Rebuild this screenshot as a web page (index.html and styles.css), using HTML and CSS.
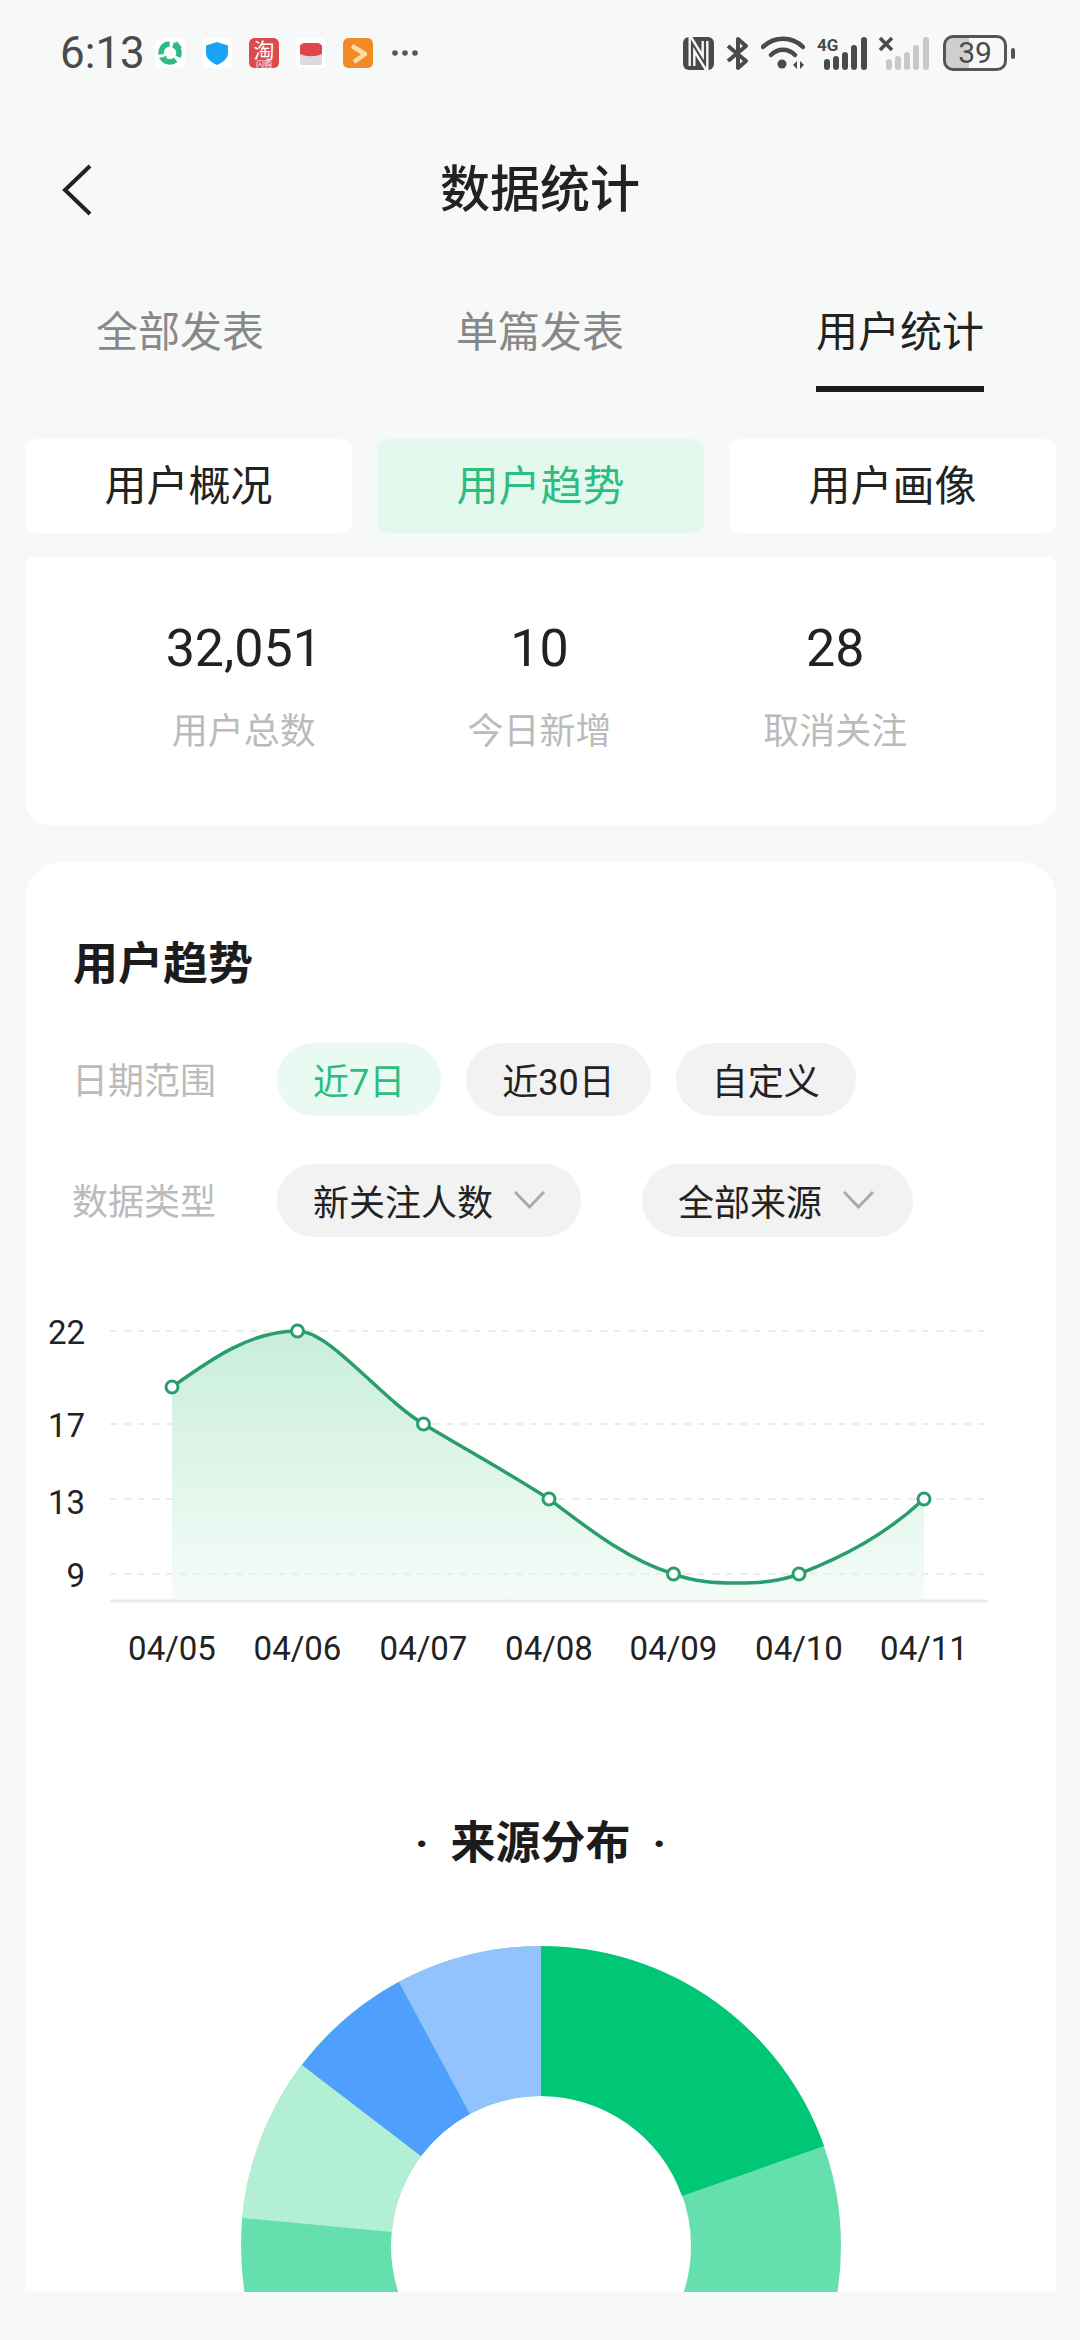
FILE: index.html
```html
<!DOCTYPE html>
<html lang="zh">
<head>
  <meta charset="utf-8">
  <title>数据统计</title>
  <link rel="stylesheet" href="styles.css">
</head>
<body>
  <div class="screen">
    <div class="status-bar">
      <div class="status-left">
        <span class="time">6:13</span>
        <div class="app-icons">
          <svg class="app-icon" viewBox="0 0 30 30">
            <circle cx="15" cy="15" r="9" fill="none" stroke="#2fb985" stroke-width="5.500" stroke-dasharray="15 3.850" transform="rotate(-70 15 15)"/>
            <path d="M22 3l5 7-8 1zM10 26l-6-6 8-2z" fill="#2fb985"/>
          </svg>
          <svg class="app-icon" viewBox="0 0 30 30">
            <path d="M15 4l11 3.500v7c0 6-5 10-11 12.500C9 24.500 4 20.500 4 14.500v-7z" fill="#1aa3f5"/>
          </svg>
          <svg class="app-icon" viewBox="0 0 30 30">
            <rect width="30" height="31" rx="5" fill="#dc4a50"/>
            <text class="taobao-main" x="15" y="20">淘</text>
            <text class="taobao-sub" x="15" y="29">闪购</text>
          </svg>
          <svg class="app-icon" viewBox="0 0 30 30">
            <path d="M4 16h22v9a2 2 0 0 1-2 2H6a2 2 0 0 1-2-2z" fill="#dcd9e0"/>
            <path d="M4 9c0-3 3-4 5-4h12c2 0 5 1 5 4v7c-7 3-15 3-22 0z" fill="#e2454c"/>
          </svg>
          <svg class="app-icon" viewBox="0 0 30 30">
            <rect width="30" height="31" rx="5" fill="#f28a28"/>
            <path d="M9 8l13 8-11 8" fill="none" stroke="#fbdca6" stroke-width="4.500" stroke-linejoin="round"/>
          </svg>
        </div>
        <svg class="more-dots" width="26" height="8" viewBox="0 0 26 8">
          <circle cx="3" cy="4" r="2.800"/><circle cx="13" cy="4" r="2.800"/><circle cx="23" cy="4" r="2.800"/>
        </svg>
      </div>
      <div class="status-right">
        <svg width="31" height="33" viewBox="0 0 31 33">
          <rect width="31" height="33" rx="6" fill="#4a4a4a"/>
          <path d="M9 29V6l13 21V4" fill="none" stroke="#f7f9f8" stroke-width="7"/>
          <path d="M9 29V6l13 21V4" fill="none" stroke="#4a4a4a" stroke-width="2.200"/>
        </svg>
        <svg width="23" height="35" viewBox="0 0 23 35">
          <path d="M2 10l18 15-8 7V3l8 7L2 25" fill="none" stroke="#4a4a4a" stroke-width="4" stroke-linejoin="round"/>
        </svg>
        <svg width="44" height="34" viewBox="0 0 44 34">
          <path d="M2 11C13 0 31 0 42 11M10 19c7-7 17-7 24 0" fill="none" stroke="#4a4a4a" stroke-width="4.500" stroke-linecap="round"/>
          <circle cx="21" cy="28" r="4.500" fill="#4a4a4a"/>
          <path d="M32 29l4-4v8zM39 25l4 4-4 4z" fill="#4a4a4a"/>
        </svg>
        <svg width="50" height="34" viewBox="0 0 50 34">
          <text class="net-label" x="0" y="15">4G</text>
          <g fill="#4a4a4a">
            <rect x="7" y="23" width="6" height="11" rx="3"/>
            <rect x="16" y="20" width="6" height="14" rx="3"/>
            <rect x="25" y="16" width="6" height="18" rx="3"/>
            <rect x="34" y="9" width="6" height="25" rx="3"/>
            <rect x="44" y="1" width="6" height="33" rx="3"/>
          </g>
        </svg>
        <svg width="50" height="34" viewBox="0 0 50 34">
          <path d="M1 2l12 12M13 2L1 14" stroke="#4a4a4a" stroke-width="3.500"/>
          <g fill="#c8c8c8">
            <rect x="7" y="23" width="6" height="11" rx="3"/>
            <rect x="16" y="20" width="6" height="14" rx="3"/>
            <rect x="25" y="16" width="6" height="18" rx="3"/>
            <rect x="34" y="9" width="6" height="25" rx="3"/>
            <rect x="44" y="1" width="6" height="33" rx="3"/>
          </g>
        </svg>
        <div class="battery">
          <div class="battery-body">39</div>
          <div class="battery-nub"></div>
        </div>
      </div>
    </div>

    <div class="nav-bar">
      <svg class="back-icon" width="30" height="52" viewBox="0 0 30 52">
        <path d="M28 2L3 26l25 24" fill="none" stroke="#222" stroke-width="4"/>
      </svg>
      <h1 class="nav-title">数据统计</h1>
      <div></div>
    </div>

    <div class="tabs">
      <div class="tab">全部发表</div>
      <div class="tab">单篇发表</div>
      <div class="tab tab-active">用户统计</div>
    </div>

    <div class="sub-tabs">
      <div class="sub-tab">用户概况</div>
      <div class="sub-tab sub-tab-active">用户趋势</div>
      <div class="sub-tab">用户画像</div>
    </div>

    <div class="stats-card">
      <div class="stat">
        <div class="stat-num">32,051</div>
        <div class="stat-label">用户总数</div>
      </div>
      <div class="stat">
        <div class="stat-num">10</div>
        <div class="stat-label">今日新增</div>
      </div>
      <div class="stat">
        <div class="stat-num">28</div>
        <div class="stat-label">取消关注</div>
      </div>
    </div>

    <div class="trend-card">
      <h2 class="card-title">用户趋势</h2>

      <div class="filter-row">
        <span class="filter-label">日期范围</span>
        <div class="pill pill-active">近7日</div>
        <div class="pill">近30日</div>
        <div class="pill">自定义</div>
      </div>

      <div class="filter-row filter-row-wide">
        <span class="filter-label">数据类型</span>
        <div class="pill pill-select">新关注人数
          <svg width="31" height="18" viewBox="0 0 31 18"><path d="M1 1l14.500 15L30 1" fill="none" stroke="#aaa" stroke-width="3"/></svg>
        </div>
        <div class="pill pill-select pill-select-source">全部来源
          <svg width="31" height="18" viewBox="0 0 31 18"><path d="M1 1l14.500 15L30 1" fill="none" stroke="#aaa" stroke-width="3"/></svg>
        </div>
      </div>

      <svg class="line-chart" width="1031" height="400" viewBox="25 1280 1031 400">
        <defs>
          <linearGradient id="areaFill" gradientUnits="userSpaceOnUse" x1="0" y1="1331" x2="0" y2="1601">
            <stop offset="0" stop-color="#c8eedb"/>
            <stop offset="1" stop-color="#f5fcf8"/>
          </linearGradient>
        </defs>
        <path fill="url(#areaFill)" d="M172 1387C210 1360 250 1331 297.500 1331C330 1331 380 1398 423.500 1424C465 1449 507 1472 549 1499C590 1530 628 1560 673.500 1574C695 1582 715 1583 737 1583C758 1583 778 1582 799 1574C845 1556 885 1535 924 1499L924 1601L172 1601Z"/>
        <g class="grid-lines">
          <line x1="110" x2="985" y1="1331" y2="1331"/>
          <line x1="110" x2="985" y1="1424" y2="1424"/>
          <line x1="110" x2="985" y1="1499" y2="1499"/>
          <line x1="110" x2="985" y1="1574" y2="1574"/>
        </g>
        <line class="axis-line" x1="110" x2="988" y1="1601" y2="1601"/>
        <path class="trend-line" d="M172 1387C210 1360 250 1331 297.500 1331C330 1331 380 1398 423.500 1424C465 1449 507 1472 549 1499C590 1530 628 1560 673.500 1574C695 1582 715 1583 737 1583C758 1583 778 1582 799 1574C845 1556 885 1535 924 1499"/>
        <g class="trend-points">
          <circle cx="172" cy="1387" r="6"/>
          <circle cx="297.500" cy="1331" r="6"/>
          <circle cx="423.500" cy="1424" r="6"/>
          <circle cx="549" cy="1499" r="6"/>
          <circle cx="673.500" cy="1574" r="6"/>
          <circle cx="799" cy="1574" r="6"/>
          <circle cx="924" cy="1499" r="6"/>
        </g>
        <g class="y-labels">
          <text x="85" y="1344">22</text>
          <text x="85" y="1437">17</text>
          <text x="85" y="1514">13</text>
          <text x="85" y="1587">9</text>
        </g>
        <g class="x-labels">
          <text x="172" y="1660">04/05</text>
          <text x="297.500" y="1660">04/06</text>
          <text x="423.500" y="1660">04/07</text>
          <text x="549" y="1660">04/08</text>
          <text x="673.500" y="1660">04/09</text>
          <text x="799" y="1660">04/10</text>
          <text x="924" y="1660">04/11</text>
        </g>
      </svg>

      <h2 class="source-title"><span>·</span>来源分布<span>·</span></h2>

      <!-- donut runs past the bottom of the screen, only the top part shows -->
      <svg class="donut" width="600" height="600" viewBox="-300 -300 600 600">
        <circle r="225" fill="none" stroke="#66dfae" stroke-width="150"/>
        <path fill="#00c776" d="M0 -300A300 300 0 0 1 283 -100L141 -50A150 150 0 0 0 0 -150Z"/>
        <path fill="#b2efd5" d="M-239 -181A300 300 0 0 0 -299 -28L-149 -14A150 150 0 0 1 -120 -90Z"/>
        <path fill="#4f9fff" d="M-142 -264A300 300 0 0 0 -239 -181L-120 -90A150 150 0 0 1 -71 -132Z"/>
        <path fill="#93c3fc" d="M0 -300A300 300 0 0 0 -142 -264L-71 -132A150 150 0 0 1 0 -150Z"/>
      </svg>
    </div>
  </div>
</body>
</html>
```

FILE: styles.css
```css
* {
  box-sizing: border-box;
}

html, body {
  margin: 0;
  padding: 0;
  background-color: #f7f9f8;
}

body {
  width: 1080px;
  height: 2340px;
  overflow: hidden;
  color: #222;
  font-family: Roboto, "Noto Sans CJK SC", sans-serif;
}

.screen {
  height: 2292px;
  overflow: hidden;
}

/* status bar */
.status-bar {
  height: 106px;
  padding: 0 65px 0 60px;
  display: flex;
  justify-content: space-between;
  align-items: center;
}

.status-left, .status-right, .app-icons {
  display: flex;
  align-items: center;
}

.time {
  font-size: 44px;
  color: #4a4a4a;
  width: 95px;
}

.app-icons {
  gap: 17px;
}

.app-icon {
  width: 30px;
  height: 30px;
  background-color: #fff;
  border-radius: 5px;
}

.taobao-main {
  font-size: 21px;
  fill: #fff;
  text-anchor: middle;
}

.taobao-sub {
  font-size: 8px;
  fill: #fff;
  text-anchor: middle;
}

.more-dots {
  margin-left: 19px;
  fill: #555;
}

.status-right {
  gap: 12px;
}

.net-label {
  font-size: 17px;
  font-weight: bold;
  fill: #4a4a4a;
}

.battery {
  display: flex;
  align-items: center;
  gap: 4px;
  margin-left: 2px;
}

.battery-body {
  width: 64px;
  height: 36px;
  border: 3px solid #555;
  border-radius: 10px;
  background: linear-gradient(90deg, #cfcfcf 40%, transparent 40%);
  font-size: 30px;
  line-height: 30px;
  text-align: center;
  color: #4a4a4a;
}

.battery-nub {
  width: 4px;
  height: 11px;
  background-color: #555;
  border-radius: 2px;
}

/* title */
.nav-bar {
  height: 164px;
  padding: 3px 62px 0;
  display: grid;
  grid-template-columns: 1fr auto 1fr;
  align-items: center;
}

.nav-title {
  margin: 0;
  font-size: 50px;
  font-weight: 500;
  line-height: 60px;
  color: #222;
}

/* tabs */
.tabs {
  padding-top: 32px;
  display: grid;
  grid-template-columns: repeat(3, 1fr);
  justify-items: center;
}

.tab {
  width: 168px;
  height: 90px;
  font-size: 42px;
  line-height: 62px;
  text-align: center;
  color: #888;
  white-space: nowrap;
}

.tab-active {
  color: #222;
  border-bottom: 6px solid #1c1c1c;
}

.sub-tabs {
  margin-top: 47px;
  padding: 0 24px 0 25px;
  display: grid;
  grid-template-columns: repeat(3, 1fr);
  gap: 25px;
}

.sub-tab {
  height: 94px;
  border-radius: 10px;
  background-color: #fff;
  font-size: 42px;
  line-height: 96px;
  text-align: center;
  color: #222;
}

.sub-tab-active {
  background-color: #e4f9ee;
  color: #2dbd80;
}

/* numbers */
.stats-card {
  margin: 24px 24px 0 25px;
  height: 268px;
  padding: 64px 73px 0 71px;
  display: grid;
  grid-template-columns: repeat(3, 1fr);
  align-content: start;
  background-color: #fff;
  border-radius: 8px 8px 24px 24px;
}

.stat {
  text-align: center;
}

.stat-num {
  font-size: 52px;
  line-height: 56px;
  color: #222;
}

.stat-label {
  margin-top: 31px;
  font-size: 36px;
  line-height: 48px;
  color: #bbb;
}

/* trend card */
.trend-card {
  margin: 37px 24px 0 25px;
  padding: 78px 49px 0;
  min-height: 1500px;
  background-color: #fff;
  border-radius: 36px 36px 0 0;
}

.card-title {
  margin: 0 0 0 -1px;
  font-size: 45px;
  font-weight: bold;
  line-height: 50px;
  color: #1c1c1c;
}

.filter-row {
  margin-top: 53px;
  display: flex;
  align-items: center;
  gap: 25px;
}

.filter-row-wide {
  margin-top: 48px;
}

.filter-label {
  width: 178px;
  padding-bottom: 4px;
  margin-left: -2px;
  margin-right: 2px;
  font-size: 36px;
  color: #bbb;
  white-space: nowrap;
}

.pill {
  height: 73px;
  padding: 0 36px 2px;
  display: flex;
  align-items: center;
  border-radius: 37px;
  background-color: #f2f2f2;
  font-size: 36px;
  color: #222;
  white-space: nowrap;
}

.pill-active {
  background-color: #e9faf2;
  color: #2dbd80;
}

.pill-select {
  gap: 21px;
}

.pill-select-source {
  margin-left: 36px;
  padding-right: 39px;
}

/* line chart */
.line-chart {
  display: block;
  margin: 43px -49px 0;
}

.grid-lines line {
  stroke: #ececec;
  stroke-width: 2;
  stroke-dasharray: 7 7;
}

.axis-line {
  stroke: #ececec;
  stroke-width: 3;
}

.trend-line {
  fill: none;
  stroke: #2a9d6c;
  stroke-width: 3.500;
}

.trend-points circle {
  fill: #fff;
  stroke: #2a9d6c;
  stroke-width: 3;
}

.y-labels text {
  font-size: 33px;
  text-anchor: end;
  fill: #222;
}

.x-labels text {
  font-size: 33px;
  text-anchor: middle;
  fill: #222;
}

/* source donut */
.source-title {
  margin: 139px 0 0;
  display: flex;
  justify-content: center;
  gap: 22px;
  font-size: 45px;
  font-weight: bold;
  line-height: 50px;
  color: #1c1c1c;
}

.donut {
  display: block;
  margin: 77px auto 0;
}
```
